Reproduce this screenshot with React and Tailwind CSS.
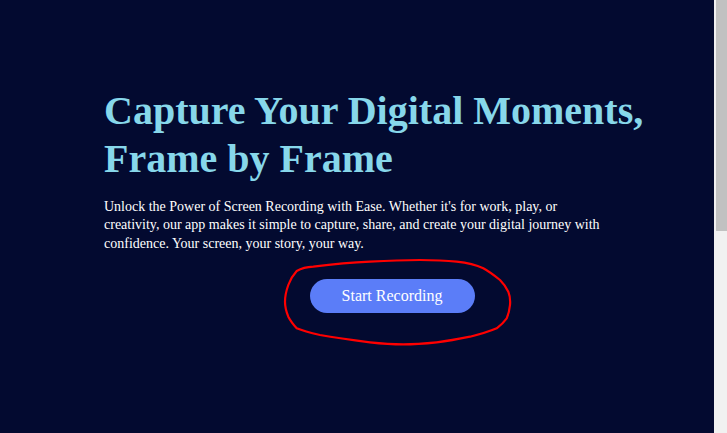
export default function App() {
  return (
    <div className="relative flex h-[433px] w-[727px] overflow-hidden bg-[#030a30] font-['Liberation_Serif','Times_New_Roman',serif]">
      <main className="flex-1 pt-[87px]">
        <div className="ml-[104px] flex w-[576px] flex-col">
          <h1 className="whitespace-nowrap text-[40px] font-bold leading-[48px] text-[#87d7ea]">
            Capture Your Digital Moments,
            <br />
            Frame by Frame
          </h1>
          <p className="mt-[15px] max-w-[500px] text-[14px] leading-[18.3px] text-white">
            Unlock the Power of Screen Recording with Ease. Whether it's for work, play, or creativity, our app makes it simple to capture, share, and create your digital journey with confidence. Your screen, your story, your way.
          </p>
          <button className="mt-[26px] h-[34px] w-[165px] self-center rounded-full bg-[#5b7df8] text-[16px] text-white">
            Start Recording
          </button>
        </div>
      </main>

      {/* scrollbar */}
      <div className="w-[13px] bg-[#f1f1f1] pl-[2px]">
        <div className="h-[231px] bg-[#c1c1c1]" />
      </div>

      {/* hand-drawn annotation around the button */}
      <svg className="pointer-events-none absolute inset-0" width="727" height="433" viewBox="0 0 727 433" fill="none">
        <path
          d="M296.7 271 C302 268 307 267 313.3 266.7 C335 264 352 262.5 370 261.7 C390 260.5 405 260 420 260 C435 260 446 260.5 456.7 261.7 C468 263 476 265 483.3 268.3 C490 272 495 276 500 280 C504 284 506.5 288 508.3 291.7 C510 296 510.5 300 510 305 C509.5 310 508.5 314 506.7 318.3 C504 322 500.5 325.5 496.7 328.3 C488 332 479 334.5 470 336.7 C459 339 448 341 436.7 342.3 C425 343.5 414 344.3 403.3 344.3 C392 344.3 381 343.5 370 342.3 C352 340 336 337.8 320 335 C311 333 303 331 296.7 328.3 C292 323 290 320 288.3 316.7 C286 311 285 306 285 301.7 C285 296 286.5 290 288.3 285 C290.5 279 293 275 296.7 271 Z"
          stroke="#ff0000"
          strokeWidth="2.2"
          strokeLinejoin="round"
        />
      </svg>
    </div>
  );
}
